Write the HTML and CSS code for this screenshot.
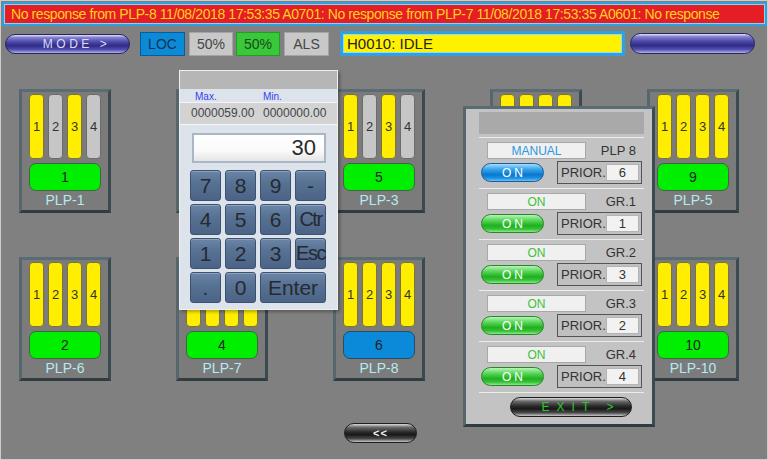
FILE: index.html
```html
<!DOCTYPE html>
<html>
<head>
<meta charset="utf-8">
<link rel="stylesheet" href="styles.css">
</head>
<body>
<div class="screen">
  <div class="banner">No response from PLP-8 11/08/2018 17:53:35 A0701: No response from PLP-7 11/08/2018 17:53:35 A0601: No response</div>

  <div class="toolbar">
    <div class="pill pill-purple mode">MODE &gt;</div>
    <div class="tag tag-blue w45 mr4">LOC</div>
    <div class="tag tag-gray w44 mr3">50%</div>
    <div class="tag tag-green w44 mr4">50%</div>
    <div class="tag tag-gray w45 mr11">ALS</div>
    <div class="status">H0010: IDLE</div>
    <div class="pill pill-purple blank"></div>
  </div>

  <div class="grid">
    <div class="card">
      <div class="bars"><div class="bar on">1</div><div class="bar off">2</div><div class="bar on">3</div><div class="bar off">4</div></div>
      <div class="unit green">1</div>
      <div class="name">PLP-1</div>
    </div>
    <div class="card">
      <div class="bars"><div class="bar on">1</div><div class="bar on">2</div><div class="bar on">3</div><div class="bar on">4</div></div>
      <div class="unit green">3</div>
      <div class="name">PLP-2</div>
    </div>
    <div class="card">
      <div class="bars"><div class="bar on">1</div><div class="bar off">2</div><div class="bar on">3</div><div class="bar off">4</div></div>
      <div class="unit green">5</div>
      <div class="name">PLP-3</div>
    </div>
    <div class="card">
      <div class="bars"><div class="bar on">1</div><div class="bar on">2</div><div class="bar on">3</div><div class="bar on">4</div></div>
      <div class="unit green">7</div>
      <div class="name">PLP-4</div>
    </div>
    <div class="card">
      <div class="bars"><div class="bar on">1</div><div class="bar on">2</div><div class="bar on">3</div><div class="bar on">4</div></div>
      <div class="unit green">9</div>
      <div class="name">PLP-5</div>
    </div>

    <div class="card">
      <div class="bars"><div class="bar on">1</div><div class="bar on">2</div><div class="bar on">3</div><div class="bar on">4</div></div>
      <div class="unit green">2</div>
      <div class="name">PLP-6</div>
    </div>
    <div class="card">
      <div class="bars"><div class="bar on">1</div><div class="bar on">2</div><div class="bar on">3</div><div class="bar on">4</div></div>
      <div class="unit green">4</div>
      <div class="name">PLP-7</div>
    </div>
    <div class="card">
      <div class="bars"><div class="bar on">1</div><div class="bar on">2</div><div class="bar on">3</div><div class="bar on">4</div></div>
      <div class="unit blue">6</div>
      <div class="name">PLP-8</div>
    </div>
    <div class="card">
      <div class="bars"><div class="bar on">1</div><div class="bar on">2</div><div class="bar on">3</div><div class="bar on">4</div></div>
      <div class="unit green">8</div>
      <div class="name">PLP-9</div>
    </div>
    <div class="card">
      <div class="bars"><div class="bar on">1</div><div class="bar on">2</div><div class="bar on">3</div><div class="bar on">4</div></div>
      <div class="unit green">10</div>
      <div class="name">PLP-10</div>
    </div>
  </div>

  <div class="bottom">
    <div class="pill pill-dark back">&lt;&lt;</div>
  </div>

  <div class="keypad">
    <div class="kp-title"></div>
    <div class="kp-labels"><span>Max.</span><span>Min.</span></div>
    <div class="kp-values"><span>0000059.00</span><span>0000000.00</span></div>
    <div class="kp-input">30</div>
    <div class="kp-keys">
      <div class="key">7</div><div class="key">8</div><div class="key">9</div><div class="key">-</div>
      <div class="key">4</div><div class="key">5</div><div class="key">6</div><div class="key narrow">Ctr</div>
      <div class="key">1</div><div class="key">2</div><div class="key">3</div><div class="key narrow">Esc</div>
      <div class="key">.</div><div class="key">0</div><div class="key wide">Enter</div>
    </div>
  </div>

  <div class="rpanel">
    <div class="rp-title"></div>
    <div class="rp-sec">
      <div class="rp-row1"><div class="rp-field manual">MANUAL</div><div class="rp-label">PLP 8</div></div>
      <div class="rp-row2"><div class="pill pill-blue on-btn">ON</div><div class="prior"><span>PRIOR.</span><div class="prior-val">6</div></div></div>
    </div>
    <div class="rp-sec">
      <div class="rp-row1"><div class="rp-field">ON</div><div class="rp-label">GR.1</div></div>
      <div class="rp-row2"><div class="pill pill-green on-btn">ON</div><div class="prior"><span>PRIOR.</span><div class="prior-val">1</div></div></div>
    </div>
    <div class="rp-sec">
      <div class="rp-row1"><div class="rp-field">ON</div><div class="rp-label">GR.2</div></div>
      <div class="rp-row2"><div class="pill pill-green on-btn">ON</div><div class="prior"><span>PRIOR.</span><div class="prior-val">3</div></div></div>
    </div>
    <div class="rp-sec">
      <div class="rp-row1"><div class="rp-field">ON</div><div class="rp-label">GR.3</div></div>
      <div class="rp-row2"><div class="pill pill-green on-btn">ON</div><div class="prior"><span>PRIOR.</span><div class="prior-val">2</div></div></div>
    </div>
    <div class="rp-sec">
      <div class="rp-row1"><div class="rp-field">ON</div><div class="rp-label">GR.4</div></div>
      <div class="rp-row2"><div class="pill pill-green on-btn">ON</div><div class="prior"><span>PRIOR.</span><div class="prior-val">4</div></div></div>
    </div>
    <div class="rp-foot">
      <div class="pill pill-dark exit">EXIT &gt;</div>
    </div>
  </div>
</div>
</body>
</html>
```

FILE: styles.css
```css
* { box-sizing: border-box; }
html, body { margin: 0; padding: 0; }
body {
  width: 768px;
  height: 460px;
  overflow: hidden;
  background: #808080;
  font-family: "Liberation Sans", Arial, sans-serif;
}
.screen {
  position: relative;
  width: 768px;
  height: 460px;
  background: #808080;
  border: 1px solid #cdcdcd;
}

/* banner */
.banner {
  margin: 1px 0 0 1px;
  width: 765px;
  height: 24px;
  background: #e41e24;
  border: 2px solid #2ba1e0;
  box-shadow: inset 0 0 0 1px #8cd2f4;
  color: #ffd21e;
  font-size: 14px;
  letter-spacing: -0.4px;
  line-height: 20px;
  padding-left: 7px;
  white-space: nowrap;
  overflow: hidden;
}

/* toolbar */
.toolbar {
  display: flex;
  align-items: center;
  margin-top: 5px;
  height: 25px;
  padding-left: 4px;
}
.pill {
  display: flex;
  align-items: center;
  justify-content: center;
  border-radius: 11px;
  white-space: nowrap;
}
.pill-purple {
  background: linear-gradient(to bottom, #e4e4f6 0%, #8480d0 14%, #4a46a4 40%, #2f2b86 60%, #5550b2 82%, #b4b4e8 100%);
  border: 1px solid #262466;
  color: #dcdcf8;
}
.mode {
  width: 125px;
  height: 20px;
  margin-right: 10px;
  font-size: 12px;
  letter-spacing: 3.5px;
  padding-left: 18px;
}
.blank {
  width: 125px;
  height: 21px;
}
.tag {
  height: 24px;
  display: flex;
  align-items: center;
  justify-content: center;
  font-size: 14px;
}
.w45 { width: 45px; }
.w44 { width: 44px; }
.mr3 { margin-right: 3px; }
.mr4 { margin-right: 4px; }
.mr11 { margin-right: 11px; }
.tag-blue { background: #0b8ad8; border: 1px solid #0a5c98; color: #14324e; }
.tag-gray { background: #c8c8c8; border: 1px solid #a4a4a4; color: #454545; }
.tag-green { background: #39c839; border: 1px solid #279a27; color: #1d4a1d; }
.status {
  width: 285px;
  height: 25px;
  margin-right: 5px;
  background: #fff200;
  border: 3px solid #2ca2e2;
  box-shadow: inset 0 0 0 1px #9ad8f6;
  color: #222;
  font-size: 15px;
  line-height: 19px;
  padding-left: 4px;
}

/* grid of PLP cards */
.grid {
  display: grid;
  grid-template-columns: repeat(5, 92px);
  grid-auto-rows: 124px;
  column-gap: 65px;
  row-gap: 44px;
  margin-top: 33px;
  padding-left: 18px;
}
.card {
  background: #7b7b7b;
  border: 3px solid;
  border-color: #5a6c72 #3a4a50 #2f3d43 #55676d;
  padding: 2px 7px 0;
}
.bars {
  display: flex;
  justify-content: space-between;
  height: 65px;
}
.bar {
  width: 15px;
  border-radius: 4px;
  display: flex;
  align-items: center;
  justify-content: center;
  font-size: 13px;
  color: #333;
}
.bar.on { background: #ffee00; border: 1px solid #7e7434; }
.bar.off { background: #c6c6c6; border: 1px solid #6c6c6c; }
.unit {
  margin-top: 4px;
  height: 28px;
  border-radius: 7px;
  display: flex;
  align-items: center;
  justify-content: center;
  font-size: 14px;
  color: #222;
}
.unit.green { background: #00ee00; border: 1px solid #3a6a3a; }
.unit.blue { background: #0a8ad8; border: 1px solid #2a4a6a; }
.name {
  text-align: center;
  color: #b4eaf2;
  font-size: 14px;
  line-height: 18px;
}

/* bottom */
.bottom {
  margin-top: 42px;
  padding-left: 343px;
}
.pill-dark {
  background: linear-gradient(to bottom, #dcdcdc 0%, #6a6a6a 18%, #2a2a2a 45%, #181818 60%, #4a4a4a 82%, #c8c8c8 100%);
  border: 1px solid #1e1e1e;
}
.back {
  width: 73px;
  height: 20px;
  color: #f2f2f2;
  font-size: 11px;
  font-weight: bold;
  letter-spacing: 1px;
}

/* keypad overlay */
.keypad {
  position: absolute;
  left: 178px;
  top: 69px;
  width: 159px;
  height: 240px;
  background: #dde3ea;
  border: 1px solid #efefef;
  box-shadow: 2px 2px 3px rgba(0, 0, 0, 0.3);
}
.kp-title {
  height: 18px;
  background: #b6b6b6;
}
.kp-labels {
  display: grid;
  grid-template-columns: 68px 68px;
  height: 13px;
  padding-left: 15px;
  font-size: 10px;
  line-height: 15px;
  color: #3340f5;
}
.kp-values {
  display: grid;
  grid-template-columns: 72px 72px;
  height: 23px;
  padding-left: 11px;
  background: #d3d3d3;
  border-top: 1px solid #f5f5f5;
  border-bottom: 1px solid #f5f5f5;
  font-size: 12px;
  line-height: 21px;
  color: #454545;
}
.kp-input {
  margin: 8px 11px 0 12px;
  height: 30px;
  background: linear-gradient(to bottom, #ffffff 0%, #fafafa 60%, #e4e4e4 100%);
  border: 2px solid #a9b6c6;
  text-align: right;
  padding-right: 8px;
  font-size: 22px;
  line-height: 26px;
  color: #2a2a2a;
}
.kp-keys {
  display: grid;
  grid-template-columns: repeat(4, 31px);
  grid-auto-rows: 31px;
  column-gap: 4px;
  row-gap: 3px;
  margin-top: 7px;
  padding-left: 10px;
}
.key {
  background: linear-gradient(to bottom, #6b85a8 0%, #587294 40%, #4a6386 100%);
  border: 1px solid #3d5170;
  border-radius: 3px;
  box-shadow: inset 0 1px 0 rgba(255, 255, 255, 0.25);
  display: flex;
  align-items: center;
  justify-content: center;
  font-size: 21px;
  color: #262a30;
}
.key.narrow { font-size: 20px; letter-spacing: -1.5px; }
.key.wide { grid-column: span 2; }

/* right panel overlay */
.rpanel {
  position: absolute;
  left: 462px;
  top: 105px;
  width: 192px;
  height: 321px;
  background: #c3c3c3;
  border: 3px solid;
  border-color: #5a6c72 #3a4a50 #2f3d43 #55676d;
  padding: 3px 8px 0 13px;
}
.rp-title {
  height: 22px;
  background: #a9a9a9;
  margin-bottom: 3px;
}
.rp-sec {
  height: 51px;
  border-top: 1px solid #ececec;
}
.rp-row1 {
  display: flex;
  align-items: center;
  margin-top: 4px;
  height: 17px;
}
.rp-field {
  width: 99px;
  height: 17px;
  margin-left: 8px;
  background: #f0f0f0;
  border: 1px solid #a8a8a8;
  display: flex;
  align-items: center;
  justify-content: center;
  font-size: 12px;
  color: #3cc23c;
}
.rp-field.manual { color: #2a98e0; }
.rp-label {
  flex: 1;
  text-align: right;
  padding-right: 8px;
  font-size: 13px;
  line-height: 15px;
  color: #333;
}
.rp-row2 {
  display: flex;
  align-items: center;
  margin-top: 2px;
  height: 23px;
}
.on-btn {
  width: 63px;
  height: 19px;
  margin-left: 2px;
  margin-right: 13px;
  color: #ffffff;
  font-size: 12px;
  letter-spacing: 3px;
  padding-left: 3px;
}
.pill-blue {
  background: linear-gradient(to bottom, #a6dcfa 0%, #3aa6ec 30%, #0a78d0 62%, #1a8ee0 82%, #6cc2f4 100%);
  border: 1px solid #1a5e9e;
}
.pill-green {
  background: linear-gradient(to bottom, #b8f4b8 0%, #5cd85c 30%, #20b020 62%, #34c034 82%, #8ce88c 100%);
  border: 1px solid #2a862a;
}
.prior {
  width: 85px;
  height: 23px;
  border: 1px solid #545454;
  background: #c0c0c0;
  display: flex;
  align-items: center;
  padding-left: 3px;
  font-size: 13px;
  color: #333;
}
.prior-val {
  margin-left: auto;
  margin-right: 2px;
  width: 38px;
  height: 17px;
  background: #f2f2f2;
  border: 1px solid #b4b4b4;
  text-align: center;
  line-height: 15px;
}
.rp-foot {
  border-top: 1px solid #ececec;
  padding-top: 4px;
  padding-left: 31px;
}
.exit {
  width: 122px;
  height: 20px;
  color: #2ec62e;
  font-size: 12px;
  letter-spacing: 7px;
  padding-left: 20px;
}
```
